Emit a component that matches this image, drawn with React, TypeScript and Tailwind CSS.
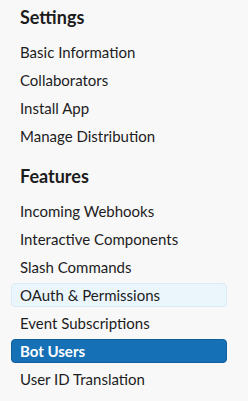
import React from "react";

const sections = [
  {
    title: "Settings",
    items: ["Basic Information", "Collaborators", "Install App", "Manage Distribution"],
  },
  {
    title: "Features",
    items: [
      "Incoming Webhooks",
      "Interactive Components",
      "Slash Commands",
      "OAuth & Permissions",
      "Event Subscriptions",
      "Bot Users",
      "User ID Translation",
    ],
  },
];

export default function App() {
  return (
    <div
      className="w-[248px] h-[401px] bg-[#f8f8f8] pt-[5px] overflow-hidden text-[#1d1c1d]"
      style={{ fontFamily: "Lato, 'Noto Sans', sans-serif" }}
    >
      {sections.map((s, si) => (
        <div key={s.title} className={si > 0 ? "mt-[16px]" : ""}>
          <h2 className="pl-[20px] text-[18px] leading-[24px] font-bold mb-[11px]">{s.title}</h2>
          <ul className="flex flex-col gap-[4px]">
            {s.items.map((it) => {
              const active = it === "Bot Users";
              const hover = it === "OAuth & Permissions";
              return (
                <li
                  key={it}
                  className={
                    "mx-[11px] w-[216px] h-[24px] pl-[8px] border rounded-[4px] text-[15px] leading-[22px] " +
                    (active
                      ? "bg-[#1570b6] border-[#125f9c] text-white font-bold"
                      : hover
                      ? "bg-[#eaf5fc] border-[#dcecf7]"
                      : "border-transparent")
                  }
                >
                  {it}
                </li>
              );
            })}
          </ul>
        </div>
      ))}
    </div>
  );
}
